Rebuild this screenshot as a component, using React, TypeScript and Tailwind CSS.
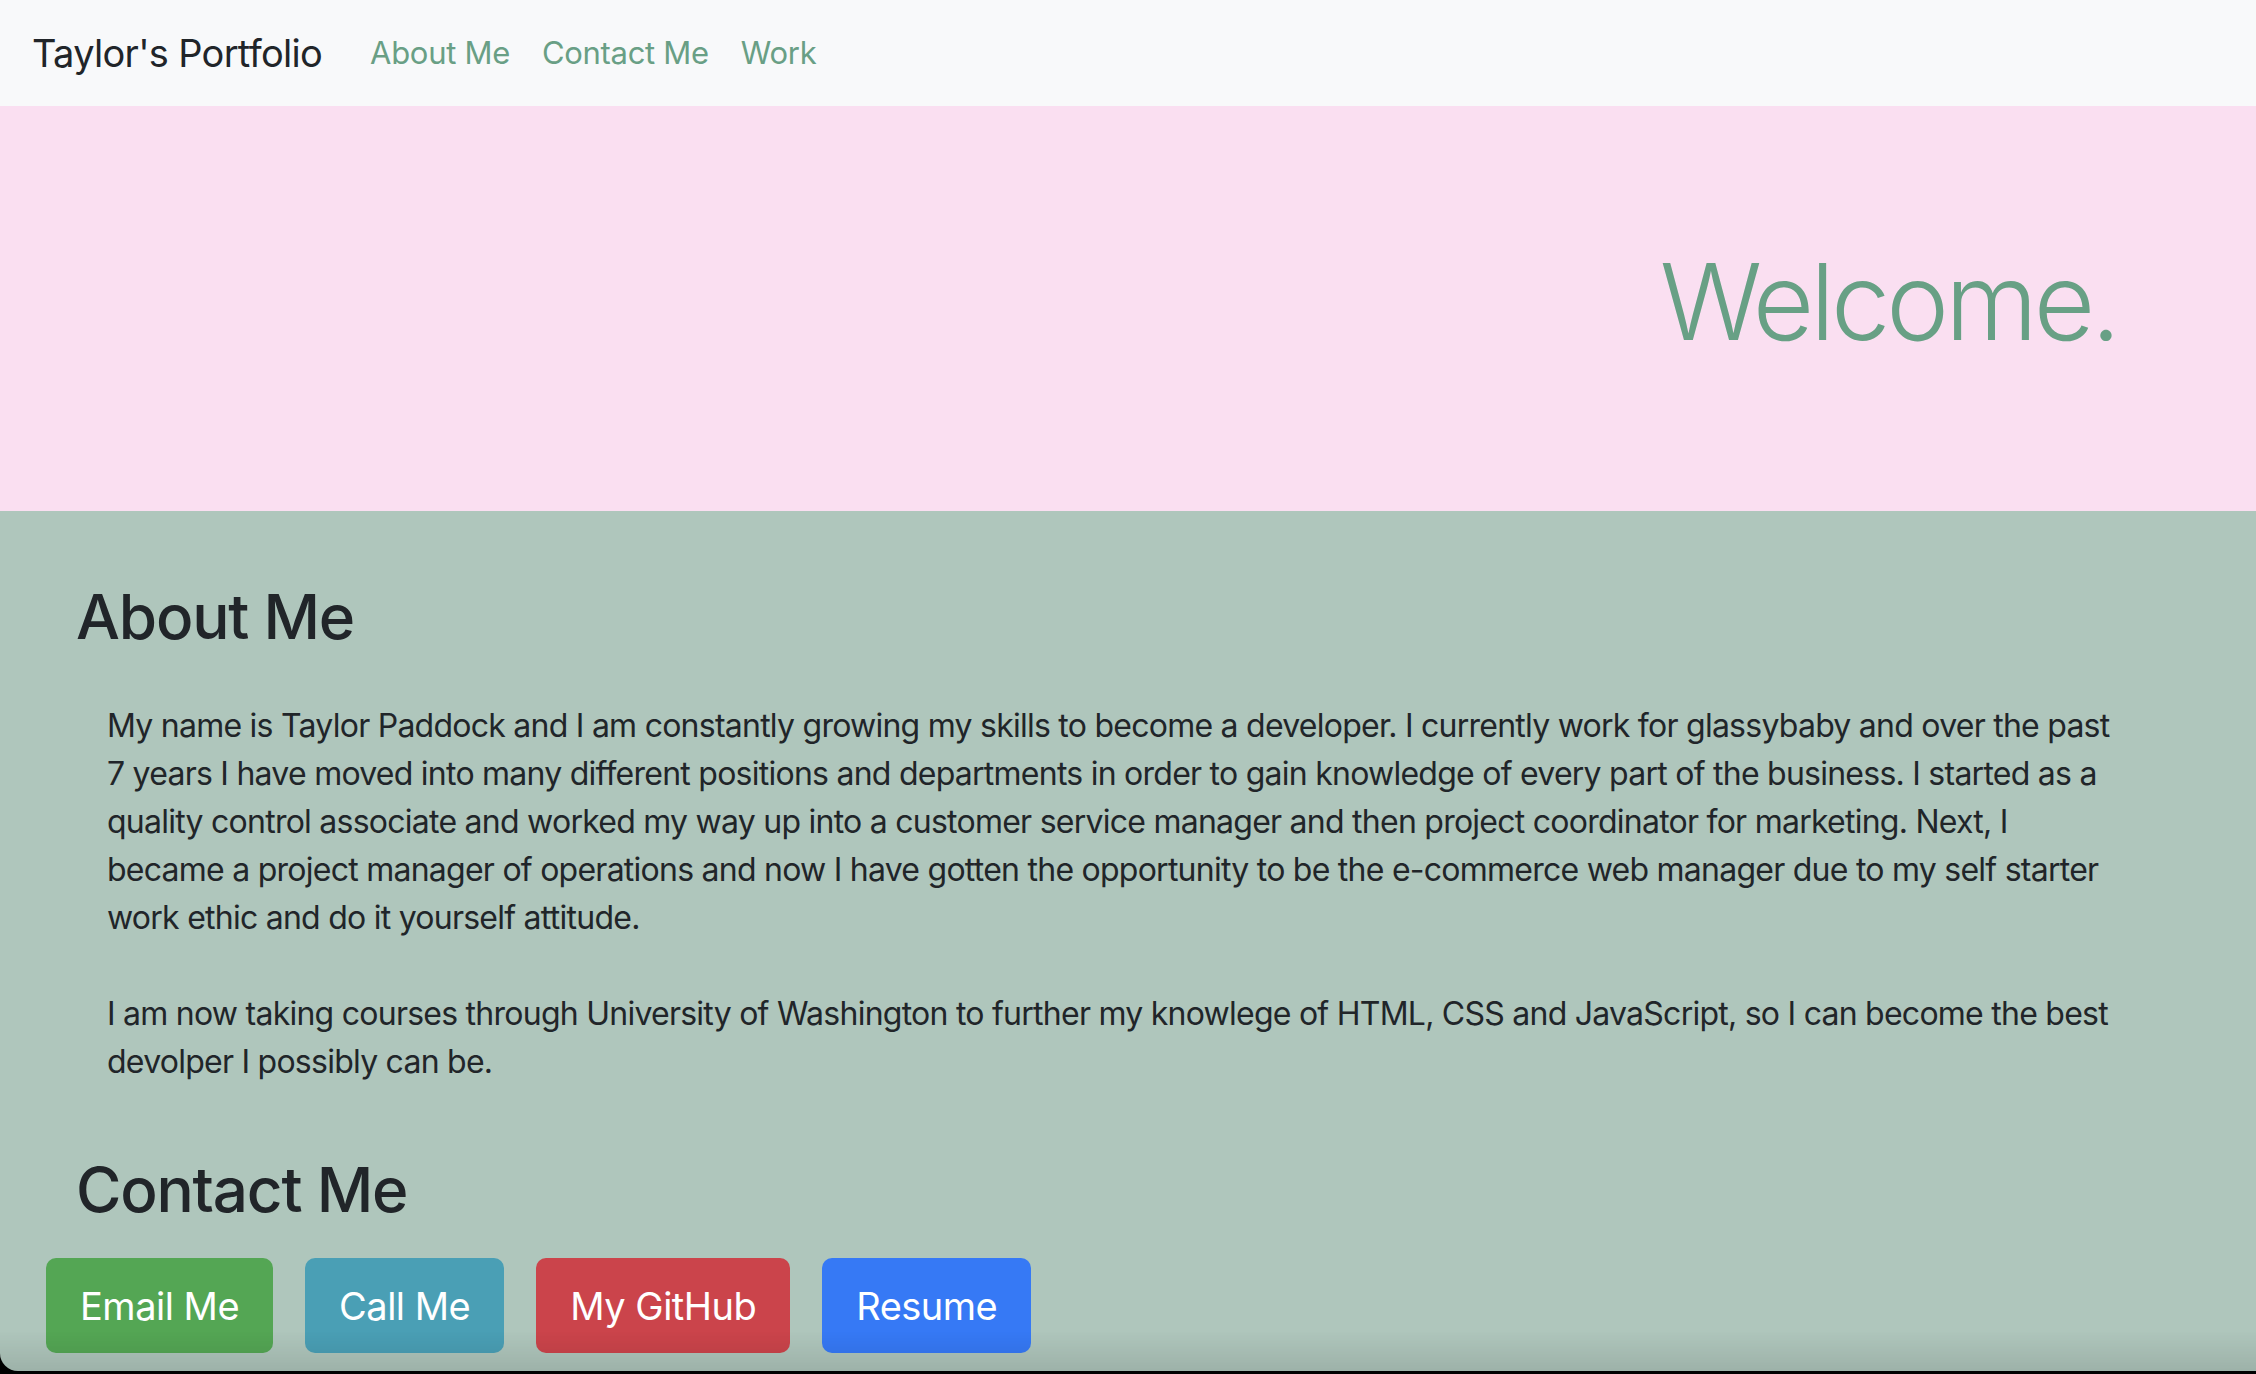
const links = ['About Me', 'Contact Me', 'Work']

const buttons = [
  { label: 'Email Me', color: 'bg-[#54a654]' },
  { label: 'Call Me', color: 'bg-[#4a9fb5]' },
  { label: 'My GitHub', color: 'bg-[#cb444b]' },
  { label: 'Resume', color: 'bg-[#3679f5]' },
]

export default function App() {
  return (
    <div className="min-h-screen flex flex-col bg-[#afc6bc] font-['Inter',sans-serif] text-[#212529]">
      {/* Navbar */}
      <nav className="h-[106px] flex items-center bg-[#f8f9fa] px-[32px]">
        <span className="text-[38px] tracking-[-0.7px] mr-[32px]">Taylor's Portfolio</span>
        {links.map((link) => (
          <a key={link} href="#" className="px-[16px] text-[31px] tracking-[-0.3px] text-[#699f85]">
            {link}
          </a>
        ))}
      </nav>

      {/* Jumbotron */}
      <header className="bg-[#fadff1] pt-[130px] pb-[143px] pr-[139px] text-right">
        <h1 className="text-[106px] leading-[132px] font-light text-[#68a085] tracking-[-4px]">Welcome.</h1>
      </header>

      {/* About + Contact */}
      <main className="flex-1 pt-[67px] pb-[21px]">
        <h2 className="pl-[76px] text-[62px] leading-[77px] font-medium tracking-[-1.2px]">About Me</h2>
        <div className="mt-[47px] pl-[107px] pr-[120px] text-[32px] leading-[48px] tracking-[-0.75px]">
          <p>
            My name is Taylor Paddock and I am constantly growing my skills to become a developer. I currently work for
            glassybaby and over the past
            <br />
            7 years I have moved into many different positions and departments in order to gain knowledge of every part
            of the business. I started as a
            <br />
            quality control associate and worked my way up into a customer service manager and then project coordinator
            for marketing. Next, I
            <br />
            became a project manager of operations and now I have gotten the opportunity to be the e-commerce web manager
            due to my self starter
            <br />
            work ethic and do it yourself attitude.
          </p>
          <p className="mt-[48px]">
            I am now taking courses through University of Washington to further my knowlege of HTML, CSS and JavaScript,
            so I can become the best
            <br />
            devolper I possibly can be.
          </p>
        </div>

        <h2 className="mt-[65px] pl-[76px] text-[62px] leading-[77px] font-medium tracking-[-1.2px]">Contact Me</h2>
        <div className="mt-[30px] pl-[46px] flex gap-[32px]">
          {buttons.map((b) => (
            <button
              key={b.label}
              className={`${b.color} h-[95px] px-[34px] rounded-[10px] text-white text-[38px] tracking-[-0.5px] leading-[60px]`}
            >
              {b.label}
            </button>
          ))}
        </div>
      </main>

      {/* window edge shading from the screenshot */}
      <div className="pointer-events-none fixed top-0 left-0 right-0 bottom-[3px] rounded-bl-[18px] shadow-[0_0_0_40px_#000] flex flex-col justify-end overflow-hidden">
        <div className="h-[40px] bg-gradient-to-b from-transparent to-black/10" />
      </div>
    </div>
  )
}
